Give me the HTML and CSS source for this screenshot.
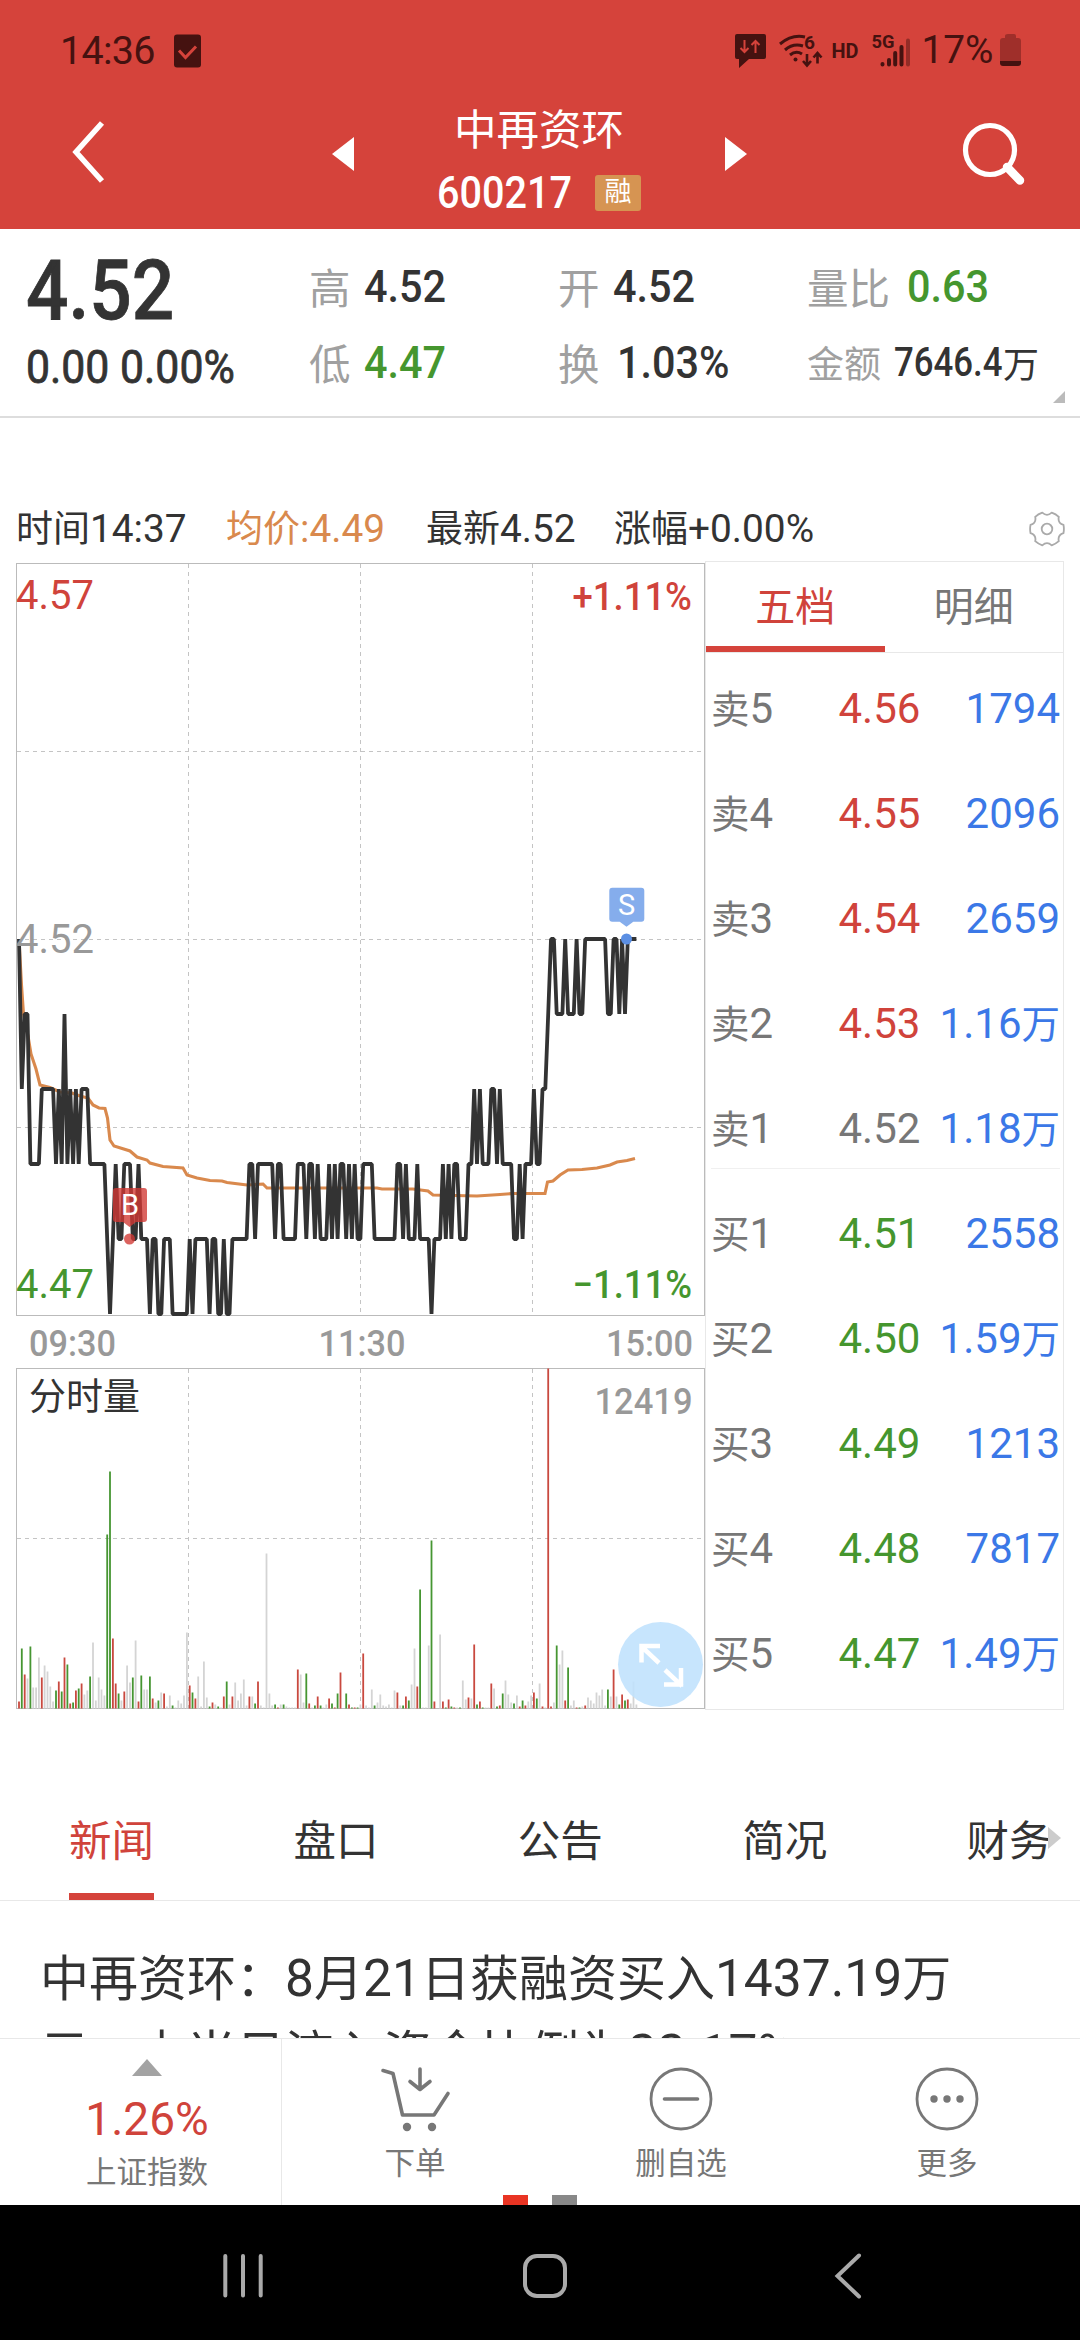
FILE: index.html
```
<!DOCTYPE html>
<html lang="zh-CN">
<head>
    <meta charset="UTF-8">
    <meta name="viewport" content="width=device-width, initial-scale=1.0">
    <title>中再资环 600217</title>
    <link rel="stylesheet" href="styles.css">
</head>
<body>
    <div class="app">
        <header class="header">
            <div class="status-bar">
                <span class="clock">14:36</span>
                <svg class="status-check" width="27" height="34" viewBox="0 0 27 34">
                    <rect x="0" y="0.5" width="27" height="33" rx="3" fill="#451210"/>
                    <path d="M5 16.5l6.5 7L22 12.5" fill="none" stroke="#d5433b" stroke-width="3"/>
                </svg>
                <svg class="status-icons" width="290" height="40" viewBox="732 32 290 40">
                    <path d="M737 35h27q2 0 2 2v21q0 2-2 2h-15l-10 9v-9h-2q-2 0-2-2V37q0-2 2-2z" fill="#451210"/>
                    <path d="M744.5 41v12m-4-4l4 4 4-4M755.5 54V42m-4 4l4-4 4 4" fill="none" stroke="#d5433b" stroke-width="2"/>
                    <g fill="none" stroke="#451210" stroke-width="3">
                        <path d="M780 45q12-10 25-7M785 51q8-7 18-4M790 56q6-5 12-1"/>
                        <path d="M807 55v11m-4-4l4 4.5 4-4.5M817.500 64.500V54m-4 4.500l4-4.500 4 4.500" stroke-width="2.600"/>
                    </g>
                    <circle cx="795.500" cy="60.500" r="2" fill="#451210"/>
                    <text x="804" y="50" class="st-text" font-size="19">6</text>
                    <text x="831.500" y="58.500" class="st-text" font-size="20" textLength="27" lengthAdjust="spacingAndGlyphs">HD</text>
                    <text x="871.500" y="49" class="st-text" font-size="18.500" textLength="23" lengthAdjust="spacingAndGlyphs">5G</text>
                    <g stroke="#451210" stroke-width="4" stroke-linecap="round">
                        <path d="M882.500 65v0.500M889 61v4.500M895.200 54v11.500M901.500 48v17.500"/>
                        <path d="M908 41.500v24" opacity="0.450"/>
                    </g>
                    <text x="921.500" y="64" class="st-percent" font-size="39.500" textLength="72" lengthAdjust="spacingAndGlyphs">17%</text>
                    <path d="M1008 35h6q2 0 2 2v2h2q3 0 3 3v21h-21V42q0-3 3-3h2v-2q0-2 3-2z" fill="#9f2f2a"/>
                    <path d="M1000 62h21v2q0 3-3 3h-15q-3 0-3-3z" fill="#451210"/>
                </svg>
            </div>
            <div class="title-bar">
                <svg class="back" width="36" height="64" viewBox="0 0 36 64">
                    <path d="M32 3L6 32l26 29" fill="none" stroke="#fff" stroke-width="5.500"/>
                </svg>
                <svg class="prev" width="22" height="34" viewBox="0 0 22 34"><path d="M22 0v34L0 17z" fill="#fff"/></svg>
                <div class="stock">
                    <div class="stock-name">中再资环</div>
                    <div class="stock-code"><span class="din">600217</span><span class="tag">融</span></div>
                </div>
                <svg class="next" width="22" height="34" viewBox="0 0 22 34"><path d="M0 0v34l22-17z" fill="#fff"/></svg>
                <svg class="search" width="64" height="68" viewBox="0 0 64 68">
                    <circle cx="28" cy="29" r="24.500" fill="none" stroke="#fff" stroke-width="5.200"/>
                    <path d="M45 46l13 13.500" stroke="#fff" stroke-width="8.500" stroke-linecap="round"/>
                </svg>
            </div>
        </header>

        <section class="quote">
            <div class="quote-main">
                <div class="price din">4.52</div>
                <div class="change din">0.00 0.00%</div>
            </div>
            <div class="quote-cell"><span class="label">高</span><span class="value din">4.52</span></div>
            <div class="quote-cell"><span class="label">开</span><span class="value din">4.52</span></div>
            <div class="quote-cell wide"><span class="label">量比</span><span class="value din green">0.63</span></div>
            <div class="quote-cell"><span class="label">低</span><span class="value din green">4.47</span></div>
            <div class="quote-cell wide"><span class="label">换</span><span class="value din">1.03%</span></div>
            <div class="quote-cell small"><span class="label">金额</span><span class="value din">7646.4</span><span class="unit">万</span></div>
        </section>

        <div class="info-row">
            <span class="info-time"><i>时间</i>14:37</span>
            <span class="info-avg"><i>均价</i>:4.49</span>
            <span class="info-last"><i>最新</i>4.52</span>
            <span class="info-chg"><i>涨幅</i>+0.00%</span>
            <svg class="gear" width="36" height="36" viewBox="-18 -18 36 36" fill="none" stroke="#aaa" stroke-width="1.800">
                <path d="M16.500-4.100Q17.300 0 16.500 4.100Q10.400 6 11.800 12.200Q8.900 14.900 4.700 16.300Q0 12-4.700 16.300Q-8.900 14.900-11.800 12.200Q-10.400 6-16.500 4.100Q-17.300 0-16.500-4.100Q-10.400-6-11.800-12.200Q-8.900-14.900-4.700-16.300Q0-12 4.700-16.300Q8.900-14.900 11.800-12.200Q10.400-6 16.500-4.100z"/>
                <circle r="5.300"/>
            </svg>
        </div>

        <main class="market">
            <div class="charts">
                <svg class="price-chart" width="689" height="756" viewBox="16 561 689 756">
                    <rect class="frame" x="16.500" y="563.500" width="688" height="752"/>
                    <path class="grid" d="M188.500 564v751M360.500 564v751M532.500 564v751M17 751.500h687M17 939.500h687M17 1127.500h687"/>
                    <polyline class="avg-line" id="avgLine"/>
                    <polyline class="price-line" id="priceLine"/>
                    <text class="axis red" x="16" y="609">4.57</text>
                    <text class="axis gray" x="16" y="953">4.52</text>
                    <text class="axis green" x="16" y="1298">4.47</text>
                    <text class="axis pct red" x="572.500" y="609.500" textLength="119.500" lengthAdjust="spacingAndGlyphs">+1.11%</text>
                    <text class="axis pct green" x="572.500" y="1298" textLength="119.500" lengthAdjust="spacingAndGlyphs">−1.11%</text>
                    <g fill="#d23833" opacity="0.780">
                        <path d="M116 1188h28q3 0 3 3v28q0 3-3 3h-8l-6.500 5-6.500-5h-7q-3 0-3-3v-28q0-3 3-3z"/>
                        <circle cx="129.500" cy="1239" r="5.500"/>
                    </g>
                    <text class="mark" x="130" y="1215">B</text>
                    <path d="M612.300 887.700h29q3 0 3 3v28q0 3-3 3h-8l-6.800 5-6.800-5h-7.400q-3 0-3-3v-28q0-3 3-3z" fill="#85adec"/>
                    <circle cx="626.500" cy="939" r="5.500" fill="#5b8fe3"/>
                    <text class="mark" x="626.500" y="914.500">S</text>
                </svg>
                <svg class="time-axis" width="689" height="51" viewBox="16 1317 689 51">
                    <text x="29" y="1355.500" textLength="87" lengthAdjust="spacingAndGlyphs">09:30</text>
                    <text x="318.500" y="1355.500" textLength="87" lengthAdjust="spacingAndGlyphs">11:30</text>
                    <text x="606" y="1355.500" textLength="87" lengthAdjust="spacingAndGlyphs">15:00</text>
                </svg>
                <svg class="volume-chart" width="689" height="342" viewBox="16 1368 689 342">
                    <rect class="frame" x="16.500" y="1368.500" width="688" height="340"/>
                    <path class="grid" d="M188.500 1369v339M360.500 1369v339M532.500 1369v339M17 1538.500h687"/>
                    <g id="volumeBars"></g>
                    <text class="vol-title" x="29" y="1409.500">分时量</text>
                    <text class="vol-max" x="594.500" y="1414" textLength="98" lengthAdjust="spacingAndGlyphs">12419</text>
                    <circle cx="660.500" cy="1664.500" r="42.500" fill="#bfe1fd" opacity="0.880"/>
                    <path d="M659 1663l-17-16M660 1646h-18.500v16.500M665 1670l17 16M664 1684.500h17V1668" fill="none" stroke="#fff" stroke-width="4.500"/>
                </svg>
            </div>

            <div class="depth">
                <div class="depth-tabs">
                    <div class="depth-tab active">五档</div>
                    <div class="depth-tab">明细</div>
                </div>
                <div class="depth-rows">
                    <div class="row"><span><i>卖</i>5</span><b class="red">4.56</b><em>1794</em></div>
                    <div class="row"><span><i>卖</i>4</span><b class="red">4.55</b><em>2096</em></div>
                    <div class="row"><span><i>卖</i>3</span><b class="red">4.54</b><em>2659</em></div>
                    <div class="row"><span><i>卖</i>2</span><b class="red">4.53</b><em>1.16<i>万</i></em></div>
                    <div class="row last-sell"><span><i>卖</i>1</span><b>4.52</b><em>1.18<i>万</i></em></div>
                    <div class="row"><span><i>买</i>1</span><b class="green">4.51</b><em>2558</em></div>
                    <div class="row"><span><i>买</i>2</span><b class="green">4.50</b><em>1.59<i>万</i></em></div>
                    <div class="row"><span><i>买</i>3</span><b class="green">4.49</b><em>1213</em></div>
                    <div class="row"><span><i>买</i>4</span><b class="green">4.48</b><em>7817</em></div>
                    <div class="row"><span><i>买</i>5</span><b class="green">4.47</b><em>1.49<i>万</i></em></div>
                </div>
            </div>
        </main>

        <nav class="tabs">
            <span class="tab active">新闻</span>
            <span class="tab">盘口</span>
            <span class="tab">公告</span>
            <span class="tab">简况</span>
            <span class="tab">财务</span>
        </nav>

        <article class="news">
            <p><i>中再资环：</i>8<i>月</i>21<i>日获融资买入</i>1437.19<i>万</i><br><i>元，占当日流入资金比例为</i>22.17%</p>
        </article>

        <footer class="toolbar">
            <div class="index-cell">
                <svg width="30" height="17" viewBox="0 0 30 17"><path d="M15 0l15 17H0z" fill="#a3a3a3"/></svg>
                <div class="index-value">1.26%</div>
                <div class="index-name">上证指数</div>
            </div>
            <div class="tool">
                <svg width="72" height="66" viewBox="379 2066 72 66" fill="none" stroke="#777" stroke-width="3.600" stroke-linecap="round" stroke-linejoin="round">
                    <path d="M383 2070.500l10 3 9.500 41.500H434l14-21.500M420 2069v20.500M410 2081.500l10 8 10-8"/>
                    <g fill="#777" stroke="none"><circle cx="407" cy="2127" r="4.200"/><circle cx="432" cy="2127" r="4.200"/></g>
                </svg>
                <span>下单</span>
            </div>
            <div class="tool">
                <svg width="66" height="66" viewBox="-33 -33 66 66" fill="none" stroke="#777" stroke-width="2.800">
                    <circle r="30"/><path d="M-16.500 0h33" stroke-width="3.600" stroke-linecap="round"/>
                </svg>
                <span>删自选</span>
            </div>
            <div class="tool">
                <svg width="66" height="66" viewBox="-33 -33 66 66" fill="none" stroke="#777" stroke-width="2.800">
                    <circle r="30"/>
                    <g fill="#777" stroke="none"><circle cx="-13" r="3.700"/><circle r="3.700"/><circle cx="13" r="3.700"/></g>
                </svg>
                <span>更多</span>
            </div>
            <div class="pager"><span class="on"></span><span></span></div>
        </footer>

        <div class="system-nav">
            <svg width="1080" height="135" viewBox="0 2205 1080 135" fill="none" stroke="#aaa" stroke-width="4">
                <path d="M225.300 2256v39.500M243 2256v39.500M260.700 2256v39.500" stroke-linecap="round"/>
                <rect x="525" y="2256" width="40" height="40" rx="12"/>
                <path d="M859 2255.500L837.500 2276l21.500 20.500" stroke-linecap="round"/>
            </svg>
        </div>
    </div>

    <script>
        // one digit per minute: how many cents below yesterday's close (4.52)
        const prices = (
            '0211' + '3333' + '22222' + '323132323' + '222' + '333333' + '454344333' + '443444' +
            '5445544455555545' + '444445445545' + '5444444' + '334333333433' + '44444' + '333433434443' +
            '434334343443333' + '44444444' + '334344434444' + '54443434334443' + '32323332232' +
            '3333' + '44343332332' + '2100' + '1110111011' + '00000000' + '1100101' + '0000'
        );

        // volume of each minute: r = up, g = down, n = flat
        const volumes = 'r7 g60 r34 n30 g62 n21 n21 n51 r31 n43 n37 n22 n7 g18 r27 g17 r51 g44 r5 g6 r18 g20 r25 n14 n18 g32 n66 n8 n31 n19 n13 ' +
            'g174 g237 r70 r25 g15 n8 r17 n43 n26 g31 n68 r7 g33 n19 n19 g32 r10 n6 g8 n16 r15 n2 n13 g3 n1 n8 n5 n13 n76 ' +
            'r23 g16 r10 n32 n2 n47 n11 g2 r6 n4 g2 n1 r12 g27 n4 r12 n26 n8 n15 n29 n3 r12 n12 g5 r27 n3 n1 n155 n15 n3 ' +
            'g4 r1 n4 g4 n2 n1 n1 n1 r39 n34 n6 g35 r5 n1 g3 r12 g3 n1 n4 r10 g5 r1 g15 r36 n0 g15 r4 g1 r1 g1 n4 ' +
            'r55 n3 n1 n19 g3 n6 n14 n3 n2 n4 n1 n18 r16 n3 g3 r12 g8 n24 n60 r22 g119 n1 n1 n63 g168 r7 n0 n74 r7 g1 r9 ' +
            'g2 r1 n1 g1 n28 n9 r11 n10 r64 g4 r7 g1 n1 n1 r25 n20 g2 r3 g15 n28 n14 n6 g5 n13 r2 g8 r3 n7 n13 r16 ' +
            'g10 n25 r2 n1 r340 r2 n6 g63 n44 n58 r8 g41 n3 n8 r1 g1 n2 r3 n11 n8 n5 n16 n13 n19 n3 g19 n12 r39 n12 g4 r14 g8 r9 n5 n27 n4';

        const average = [
            [19, 939], [21.5, 985], [23.5, 1014], [28, 1036], [31, 1054], [36, 1069], [40, 1085], [50, 1087.5],
            [60, 1092], [72, 1093], [80, 1096], [88, 1098], [93, 1105], [99, 1108], [105, 1108.5], [107.5, 1118],
            [110, 1140], [114, 1146], [130, 1151], [137, 1157], [147, 1160], [150, 1163], [163, 1166.5],
            [183, 1168], [187, 1175], [197, 1178], [210, 1180.5], [222, 1181], [227, 1182.5], [247, 1185],
            [263, 1184], [267, 1188], [377, 1188], [382, 1189], [413, 1189], [428, 1191], [433, 1195],
            [477, 1196], [500, 1194.5], [513, 1193.5], [545, 1193.5], [547.5, 1182], [553, 1181], [560, 1175],
            [568, 1170], [582, 1169.5], [597, 1168], [610, 1165], [617, 1162], [627, 1160.5], [635, 1158.5]
        ];

        const step = 2.845;
        const x0 = 19;
        const colors = { r: '#c9493f', g: '#469632', n: '#d4d4d4' };

        document.getElementById('priceLine').setAttribute('points',
            prices.split('').map((p, i) => `${(x0 + i * step).toFixed(1)},${939 + p * 75}`).join(' '));
        document.getElementById('avgLine').setAttribute('points', average.join(' '));
        document.getElementById('volumeBars').innerHTML = volumes.split(' ').map((v, i) => {
            const h = Number(v.slice(1));
            return `<rect x="${(x0 - 0.9 + i * step).toFixed(1)}" y="${1708.5 - h}" width="1.8" height="${h}" fill="${colors[v[0]]}"/>`;
        }).join('');
    </script>
</body>
</html>
```
FILE: styles.css
```
* {
    box-sizing: border-box;
}
body {
    margin: 0;
    background: #fff;
    color: #333;
    font-family: Roboto, "Noto Sans CJK SC", sans-serif;
}
svg {
    display: block;
    flex: none;
}
i, em, b {
    font-style: normal;
    font-weight: normal;
}
.app {
    width: 1080px;
    height: 2340px;
    overflow: hidden;
    display: flex;
    flex-direction: column;
}
.red {
    color: #d0433b;
    fill: #d0433b;
}
.green {
    color: #45962e;
    fill: #45962e;
}
.gray {
    fill: #999;
}
.din {
    display: inline-block;
    font-weight: 500;
    white-space: nowrap;
    transform: scaleX(0.92);
    transform-origin: 0 50%;
}

/* header */
.header {
    height: 229px;
    background: #d5433b;
    color: #fff;
}
.status-bar {
    height: 102px;
    padding: 0 58px 0 60px;
    display: flex;
    align-items: center;
}
.clock {
    width: 114px;
    color: #451210;
    font-size: 39.5px;
    line-height: 102px;
    letter-spacing: -0.7px;
}
.status-icons {
    margin-left: auto;
}
.st-text {
    fill: #451210;
    font-weight: 700;
}
.st-percent {
    fill: #451210;
}
.title-bar {
    height: 127px;
    padding: 0 54px 0 70px;
    display: flex;
    align-items: flex-start;
}
.back {
    margin-top: 18px;
}
.prev {
    margin: 35px 0 0 226px;
}
.stock {
    width: 371px;
    padding: 2px 0 0 83px;
}
.stock-name {
    margin-left: 17px;
    font-size: 42.5px;
    line-height: 54px;
}
.stock-code {
    height: 70px;
    display: flex;
    align-items: center;
    font-size: 44.5px;
    line-height: 70px;
}
.stock-code .din {
    width: 158px;
    transform: scaleX(0.89);
}
.tag {
    width: 46px;
    height: 36px;
    background: #d69452;
    border-radius: 3px;
    font-size: 27px;
    line-height: 35px;
    text-align: center;
}
.next {
    margin-top: 35px;
}
.search {
    margin: 19px 0 0 auto;
}

/* quote */
.quote {
    position: relative;
    height: 189px;
    padding: 19px 0 0 26px;
    border-bottom: 2px solid #ddd;
    display: grid;
    grid-template-columns: 283px 249px 249px 273px;
    grid-template-rows: 76px 76px;
}
.quote::after {
    content: "";
    position: absolute;
    right: 15px;
    bottom: 13px;
    border-left: 12px solid transparent;
    border-bottom: 12px solid #bbb;
}
.quote-main {
    grid-row: 1 / 3;
    padding-top: 1px;
}
.price {
    display: block;
    font-size: 83px;
    line-height: 84px;
    transform: scaleX(0.9);
    -webkit-text-stroke: 0.8px #333;
}
.change {
    font-size: 46px;
    line-height: 68px;
    font-weight: 400;
    transform: scaleX(0.93);
    -webkit-text-stroke: 0.8px #333;
}
.quote-cell {
    display: flex;
    align-items: center;
    white-space: nowrap;
}
.label {
    margin-right: 13px;
    color: #a0a0a0;
    font-size: 41.5px;
}
.value {
    font-size: 45px;
}
.wide .label {
    margin-right: 17px;
}
.small .label {
    font-size: 37px;
    margin-right: 13px;
}
.small .value {
    width: 109px;
    font-size: 40px;
    transform: scaleX(0.87);
}
.small .unit {
    font-size: 36px;
}

/* info row above the chart */
.info-row {
    height: 143px;
    padding: 78px 15px 0 16px;
    display: flex;
    align-items: flex-start;
    font-size: 38.8px;
    line-height: 66px;
    white-space: nowrap;
}
.info-row i {
    font-size: 37px;
}
.info-time {
    width: 210px;
}
.info-avg {
    width: 200px;
    color: #d9894d;
}
.info-last {
    width: 188px;
}
.gear {
    margin: 15px 0 0 auto;
}

/* charts */
.market {
    height: 1149px;
    padding-left: 16px;
    display: flex;
}
.charts {
    width: 689px;
}
.frame {
    fill: none;
    stroke: #bbb;
}
.grid {
    fill: none;
    stroke: #c4c4c4;
    stroke-dasharray: 4 4;
}
.price-line {
    fill: none;
    stroke: #333;
    stroke-width: 3.8;
    stroke-linejoin: bevel;
}
.avg-line {
    fill: none;
    stroke: #d9894d;
    stroke-width: 3.1;
}
.axis {
    font-size: 40px;
}
.pct {
    font-size: 38.5px;
    font-weight: 500;
}
.mark {
    fill: #fff;
    font-size: 29px;
    text-anchor: middle;
}
.time-axis, .vol-max {
    fill: #999;
    font-size: 37.5px;
    font-weight: 500;
}
.vol-title {
    fill: #333;
    font-size: 37px;
}

/* five-level depth */
.depth {
    width: 359px;
    border: 1px solid #e8e8e8;
}
.depth-tabs {
    height: 91px;
    display: flex;
    border-bottom: 1px solid #e8e8e8;
}
.depth-tab {
    flex: 1;
    color: #777;
    font-size: 40px;
    line-height: 91px;
    text-align: center;
}
.depth-tab.active {
    color: #d0433b;
    border-bottom: 6px solid #d5433b;
}
.depth-rows {
    padding: 3px 3px 0 5px;
}
.row {
    height: 105px;
    display: grid;
    grid-template-columns: 127.5px 90px 1fr;
    font-size: 42px;
    line-height: 105px;
    color: #777;
    white-space: nowrap;
}
.row i {
    font-size: 38.5px;
}
.row em {
    color: #3b78e7;
    text-align: right;
}
.last-sell {
    background: linear-gradient(#f0f0f0, #f0f0f0) 0 92px / 100% 1px no-repeat;
}

/* tabs */
.tabs {
    position: relative;
    height: 191px;
    padding: 75px 0 0 69px;
    border-bottom: 1px solid #e8e8e8;
    display: flex;
    gap: 139.4px;
    font-size: 42.5px;
    line-height: 113px;
    white-space: nowrap;
}
.tab {
    width: 85px;
    height: 115px;
}
.tab.active {
    color: #d0433b;
    border-bottom: 7px solid #d5433b;
}
.tabs::after {
    content: "";
    position: absolute;
    right: 19px;
    top: 117px;
    border: 11px solid transparent;
    border-left: 13px solid #ccc;
    border-right: 0;
}

/* news */
.news {
    height: 137px;
    overflow: hidden;
    padding: 41px 0 0 40px;
}
.news p {
    margin: 0;
    font-size: 51.5px;
    line-height: 74px;
    white-space: nowrap;
}
.news i {
    font-size: 49px;
}

/* bottom toolbar */
.toolbar {
    position: relative;
    height: 167px;
    border-top: 1px solid #e8e8e8;
    display: flex;
    color: #777;
    font-size: 30.5px;
    line-height: 40px;
    text-align: center;
}
.index-cell {
    width: 282px;
    padding: 20px 0 0 13px;
    border-right: 1px solid #e8e8e8;
    display: flex;
    flex-direction: column;
    align-items: center;
}
.index-value {
    color: #d0433b;
    font-size: 46px;
    line-height: 54px;
    margin-top: 16px;
}
.index-name {
    margin-top: 7px;
}
.tool {
    flex: 1;
    padding-top: 27px;
    display: flex;
    flex-direction: column;
    align-items: center;
    gap: 12px;
}
.pager {
    position: absolute;
    left: 503px;
    bottom: 0;
    display: flex;
    gap: 24px;
}
.pager span {
    width: 25px;
    height: 10px;
    background: #888;
}
.pager .on {
    background: #e93423;
}
.system-nav {
    height: 135px;
    background: #000;
}
```
